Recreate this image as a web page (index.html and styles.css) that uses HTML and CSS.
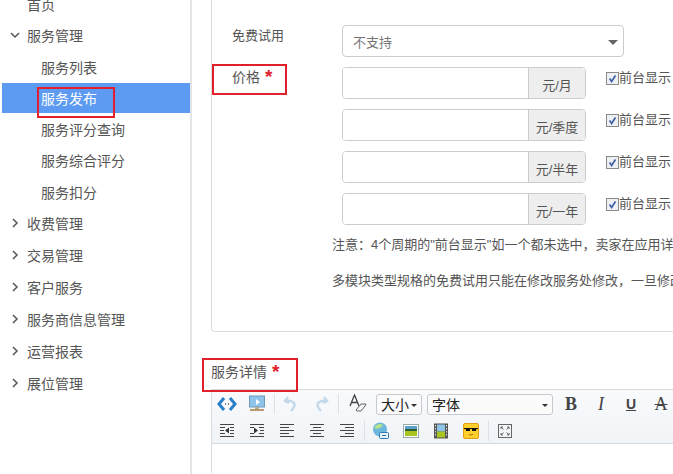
FILE: index.html
```html
<!DOCTYPE html>
<html lang="zh">
<head>
<meta charset="utf-8">
<title>服务发布</title>
<link rel="stylesheet" href="styles.css">
</head>
<body>
<div class="page">
  <nav class="sidebar">
    <a class="item top-first">首页</a>
    <a class="item"><svg class="chev" viewBox="0 0 10 10"><path d="M1 3l4 4 4-4" /></svg>服务管理</a>
    <a class="sub">服务列表</a>
    <a class="sub active">服务发布<span class="mark mark-nav"></span></a>
    <a class="sub">服务评分查询</a>
    <a class="sub">服务综合评分</a>
    <a class="sub">服务扣分</a>
    <a class="item"><svg class="chev" viewBox="0 0 10 10"><path d="M3 1l4 4-4 4" /></svg>收费管理</a>
    <a class="item"><svg class="chev" viewBox="0 0 10 10"><path d="M3 1l4 4-4 4" /></svg>交易管理</a>
    <a class="item"><svg class="chev" viewBox="0 0 10 10"><path d="M3 1l4 4-4 4" /></svg>客户服务</a>
    <a class="item"><svg class="chev" viewBox="0 0 10 10"><path d="M3 1l4 4-4 4" /></svg>服务商信息管理</a>
    <a class="item"><svg class="chev" viewBox="0 0 10 10"><path d="M3 1l4 4-4 4" /></svg>运营报表</a>
    <a class="item"><svg class="chev" viewBox="0 0 10 10"><path d="M3 1l4 4-4 4" /></svg>展位管理</a>
  </nav>
  <main class="main">
    <section class="panel">
      <div class="row">
        <div class="label label-small">免费试用</div>
        <div class="select">不支持<span class="caret"></span></div>
      </div>
      <div class="row">
        <div class="label label-price">价格 <b class="req">*</b><span class="mark mark-price"></span></div>
        <div class="group"><span class="input"></span><span class="addon">元/月</span></div>
        <label class="show"><span class="check"><svg viewBox="0 0 13 13"><path d="M3 6.500l2.500 3.500 4.500-7" /></svg></span>前台显示</label>
      </div>
      <div class="row">
        <div class="label"></div>
        <div class="group"><span class="input"></span><span class="addon">元/季度</span></div>
        <label class="show"><span class="check"><svg viewBox="0 0 13 13"><path d="M3 6.500l2.500 3.500 4.500-7" /></svg></span>前台显示</label>
      </div>
      <div class="row">
        <div class="label"></div>
        <div class="group"><span class="input"></span><span class="addon">元/半年</span></div>
        <label class="show"><span class="check"><svg viewBox="0 0 13 13"><path d="M3 6.500l2.500 3.500 4.500-7" /></svg></span>前台显示</label>
      </div>
      <div class="row">
        <div class="label"></div>
        <div class="group"><span class="input"></span><span class="addon">元/一年</span></div>
        <label class="show"><span class="check"><svg viewBox="0 0 13 13"><path d="M3 6.500l2.500 3.500 4.500-7" /></svg></span>前台显示</label>
      </div>
      <p class="note">注意：4个周期的"前台显示"如一个都未选中，卖家在应用详</p>
      <p class="note">多模块类型规格的免费试用只能在修改服务处修改，一旦修改</p>
    </section>
    <h3 class="detail-title">服务详情 <b class="req">*</b><span class="mark mark-detail"></span></h3>
    <section class="editor">
      <div class="toolbar">
        <div class="tool-row">
          <span class="btn"><svg viewBox="0 0 20 20"><path d="M7 4L2 10l5 6" fill="none" stroke="#2b7fc9" stroke-width="3"/><path d="M13 4l5 6-5 6" fill="none" stroke="#2b7fc9" stroke-width="3"/><path d="M8 10h1M11 10h1" stroke="#555" stroke-width="1.500"/></svg></span>
          <span class="btn"><svg viewBox="0 0 20 20"><rect x="2.500" y="2" width="15" height="11" fill="#8fc4ea" stroke="#6d9cbc"/><path d="M9 5l4 3-4 3z" fill="#fff"/><rect x="8" y="13" width="4" height="2" fill="#b9a98c"/><rect x="3" y="15" width="14" height="2" fill="#b59a72"/></svg></span>
          <span class="sep"></span>
          <span class="btn"><svg viewBox="0 0 20 20"><path d="M7 3L4 7l4 2M4.500 7C11 6 15 9 13 13c-.7 1.500-2 3-3 4" fill="none" stroke="#c3d9ea" stroke-width="2.400"/></svg></span>
          <span class="btn"><svg viewBox="0 0 20 20"><path d="M13 3l3 4-4 2M15.500 7C9 6 5 9 7 13c.7 1.500 2 3 3 4" fill="none" stroke="#c3d9ea" stroke-width="2.400"/></svg></span>
          <span class="sep"></span>
          <span class="btn btn-narrow"><svg viewBox="0 0 20 20"><path d="M2 12L6.500 1 11 12M3.500 8.500h6" fill="none" stroke="#444" stroke-width="1.300"/><path d="M8 16l5-6h5l-1 2-4 5H9z" fill="#f4f4f4" stroke="#666"/></svg></span>
          <span class="drop drop-size">大小<i class="mini-caret"></i></span>
          <span class="drop drop-font">字体<i class="mini-caret"></i></span>
          <span class="btn glyph glyph-b">B</span>
          <span class="btn glyph glyph-i">I</span>
          <span class="btn glyph glyph-u">U</span>
          <span class="btn glyph glyph-s">A</span>
        </div>
        <div class="tool-row">
          <span class="btn"><svg viewBox="0 0 20 20"><g fill="none" stroke="#444"><path d="M3 3.500h14M3 15.500h14"/><path d="M3 6.500h5M3 9.500h4M3 12.500h5M13 6.500h4M13 9.500h4M13 12.500h4"/></g><path d="M8 9.500l4-3v6z" fill="#333"/></svg></span>
          <span class="btn"><svg viewBox="0 0 20 20"><g fill="none" stroke="#444"><path d="M3 3.500h14M3 15.500h14"/><path d="M3 6.500h4M3 12.500h4M12 6.500h5M13 9.500h4M12 12.500h5"/></g><path d="M11 9.500l-4-3v6z" fill="#333"/></svg></span>
          <span class="btn"><svg viewBox="0 0 20 20"><path d="M3 3.500h14M3 6.500h9M3 9.500h14M3 12.500h9M3 15.500h14" fill="none" stroke="#444"/></svg></span>
          <span class="btn"><svg viewBox="0 0 20 20"><path d="M3 3.500h14M6 6.500h8M3 9.500h14M6 12.500h8M3 15.500h14" fill="none" stroke="#444"/></svg></span>
          <span class="btn"><svg viewBox="0 0 20 20"><path d="M3 3.500h14M8 6.500h9M3 9.500h14M8 12.500h9M3 15.500h14" fill="none" stroke="#444"/></svg></span>
          <span class="sep"></span>
          <span class="btn"><svg viewBox="0 0 20 20"><circle cx="9" cy="8.500" r="7" fill="#6db6dc"/><path d="M3 7c2-4 7-5 9-3-2 3-6 5-9 3z" fill="#b7e38b"/><rect x="8.500" y="11.500" width="9" height="6" rx="1" fill="#eaf4fb" stroke="#2a78b8"/><path d="M11 14.500h4" stroke="#2a78b8"/></svg></span>
          <span class="btn"><svg viewBox="0 0 20 20"><rect x="2.500" y="3.500" width="15" height="13" fill="#fff" stroke="#9aa"/><rect x="4" y="5" width="12" height="4" fill="#5aa0c8"/><rect x="4" y="8" width="12" height="2" fill="#2f5a3a"/><rect x="4" y="10" width="12" height="5" fill="#a9c41f"/></svg></span>
          <span class="btn"><svg viewBox="0 0 20 20"><rect x="3" y="2.500" width="14" height="15" fill="#555"/><rect x="6" y="3.500" width="8" height="7" fill="#8cc5e8"/><rect x="6" y="10.500" width="8" height="6" fill="#a9c41f"/><path d="M4.500 4v12M15.500 4v12" stroke="#ddd" stroke-dasharray="1.500 1.500"/></svg></span>
          <span class="btn"><svg viewBox="0 0 20 20"><rect x="2.500" y="2.500" width="15" height="15" rx="1.500" fill="#ffd02c" stroke="#e0a010"/><path d="M3 7.500h14" stroke="#111"/><path d="M4.500 7.500h4.500v2.500h-4zM11 7.500h4.500l-.5 2.500h-4z" fill="#111"/><path d="M8 13.500c1.500.8 3 .6 4-.4" fill="none" stroke="#a06a00"/></svg></span>
          <span class="sep"></span>
          <span class="btn"><svg viewBox="0 0 20 20"><rect x="3.500" y="3.500" width="13" height="13" fill="#f4f6f8" stroke="#666"/><path d="M6 6l2.500 2.500M14 6l-2.500 2.500M6 14l2.500-2.500M14 14l-2.500-2.500M6 6h2M6 6v2M14 6h-2M14 6v2M6 14h2M6 14v-2M14 14h-2M14 14v-2" fill="none" stroke="#666"/></svg></span>
        </div>
      </div>
    </section>
  </main>
</div>
</body>
</html>
```

FILE: styles.css
```css
* { box-sizing: border-box; }
html, body { margin: 0; height: 100%; overflow: hidden; background: #fff; }
body { font-family: "Liberation Sans", "Noto Sans CJK SC", sans-serif; font-size: 13px; color: #555; }
.page { display: flex; width: 673px; height: 474px; overflow: hidden; }

.sidebar { width: 192px; flex: none; border-right: 2px solid #e3e5e8; display: flex; flex-direction: column; padding-left: 2px; margin-top: -12px; height: 486px; font-size: 14px; color: #555; }
.item { display: flex; align-items: center; height: 32px; padding-left: 25px; position: relative; flex: none; }
.top-first { height: 32px; margin-bottom: -1px; }
.chev { position: absolute; left: 8px; top: 11px; width: 10px; height: 10px; }
.chev path { fill: none; stroke: #555; stroke-width: 1.500; }
.sub { display: flex; align-items: center; height: 31.250px; padding-left: 39px; position: relative; flex: none; }
.active { background: #5c9bf1; color: #fff; height: 30px; margin: 0.500px 0 0.750px; }

.mark { position: absolute; border: 2px solid #e1202b; pointer-events: none; }
.mark-nav { left: 35px; top: 4px; width: 78px; height: 31px; }
.mark-price { left: -20px; top: -3px; width: 75px; height: 31px; }
.mark-detail { left: -9px; top: -5px; width: 96px; height: 34px; }

.main { flex: none; width: 481px; padding-left: 19px; overflow: hidden; }
.panel { width: 620px; height: 332px; padding: 25px 0 0 20px; border: 1px solid #dcdcdc; border-top: 0; border-radius: 0 0 4px 4px; }
.row { display: flex; height: 32px; margin-bottom: 10px; }
.label { width: 110px; flex: none; position: relative; color: #555; }
.label-small { font-size: 13px; line-height: 22px; }
.label-price { font-size: 14px; line-height: 20px; }
.req { color: #e1202b; font-weight: bold; font-size: 19px; line-height: 14px; margin-left: 1px; vertical-align: -1px; }
.select { width: 282px; height: 32px; border: 1px solid #ccc; border-radius: 4px; padding: 1px 0 0 10px; line-height: 32px; color: #777; position: relative; }
.caret { position: absolute; right: 5px; top: 14px; border: 5px solid transparent; border-top: 5px solid #666; border-bottom: 0; }
.group { display: flex; width: 244px; height: 32px; border: 1px solid #ccc; border-radius: 4px; overflow: hidden; flex: none; }
.input { flex: 1; background: #fff; }
.addon { width: 57px; flex: none; background: #eee; border-left: 1px solid #ccc; display: flex; align-items: center; justify-content: center; padding-top: 2px; color: #555; }
.show { display: flex; align-items: flex-start; margin-left: 20px; white-space: nowrap; line-height: 21px; color: #555; }
.check { width: 13px; height: 13px; margin-top: 5px; border: 1px solid #8a8a8a; background: #eef0f4; flex: none; display: block; }
.check svg { display: block; width: 11px; height: 11px; }
.check path { fill: none; stroke: #3d5fa8; stroke-width: 2; }

.note { margin: 0 0 16px; margin-left: -20px; padding-left: 120px; white-space: nowrap; line-height: 20px; color: #555; }

.detail-title { margin: 31px 0 0; height: 26px; font-size: 14px; font-weight: normal; line-height: 18px; color: #555; position: relative; width: 90px; }

.editor { width: 620px; height: 84px; border-left: 1px solid #d8dce0; }
.toolbar { height: 55px; border-top: 1px solid #d5d9de; border-bottom: 1px solid #d5d9de; background: linear-gradient(#f8fafc, #f1f4f7); padding-top: 1px; }
.tool-row { display: flex; align-items: center; height: 26.500px; }
.btn { width: 30px; height: 20px; flex: none; display: flex; align-items: center; justify-content: center; }
.btn svg { width: 20px; height: 20px; display: block; }
.btn-narrow { width: 28px; margin: 0 4px; }
.sep { width: 4px; height: 20px; flex: none; position: relative; }
.sep::before { content: ""; position: absolute; left: 2px; top: 0; bottom: 0; width: 1px; background: #dde1e5; }
.drop { height: 21px; border: 1px solid #c6c9cd; border-radius: 3px; background: #fbfbfc; color: #222; font-size: 14px; padding-left: 4px; display: flex; align-items: center; position: relative; flex: none; }
.drop-size { width: 46px; margin-right: 5px; }
.drop-font { width: 126px; margin-right: 3px; }
.mini-caret { position: absolute; right: 4px; top: 9px; border: 3px solid transparent; border-top: 3px solid #333; border-bottom: 0; }
.glyph { font-family: "Liberation Serif", serif; font-size: 18px; color: #444; }
.glyph-b { font-weight: bold; }
.glyph-i { font-style: italic; }
.glyph-u { text-decoration: underline; font-weight: bold; font-size: 14px; font-family: "Liberation Sans", sans-serif; }
.glyph-s { text-decoration: line-through; }
```
